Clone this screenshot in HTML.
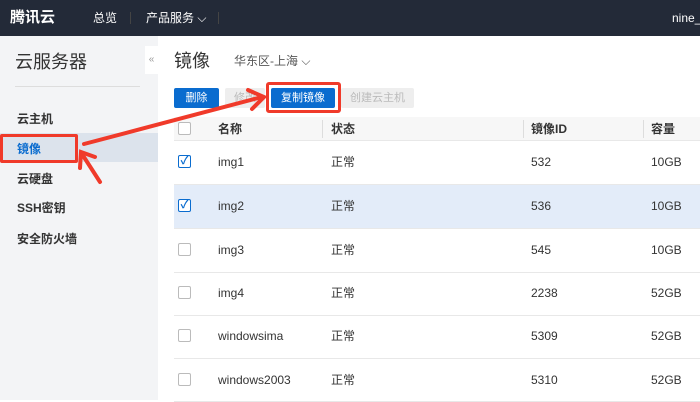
<!DOCTYPE html>
<html><head><meta charset="utf-8"><style>
*{margin:0;padding:0;box-sizing:border-box}
body{width:700px;height:400px;overflow:hidden;font-family:"Liberation Sans","Noto Sans CJK SC",sans-serif;background:#fff;position:relative;color:#333}
.top{position:absolute;left:0;top:0;width:700px;height:36px;background:#232a38;color:#fff;font-size:12px}
.top span{position:absolute;top:11px;line-height:14px}
.side{position:absolute;left:0;top:36px;width:158px;height:364px;background:#f3f4f6}
.t{position:absolute;font-size:12px;white-space:nowrap;line-height:16px}
.row{position:absolute;left:174px;width:526px;height:44px;border-bottom:1px solid #e8e8e8}
.cb{position:absolute;left:178px;width:13px;height:13px;border:1px solid #bbb;border-radius:2px;background:#fff}
.btn{position:absolute;top:88px;height:20px;font-size:11px;text-align:center;line-height:20px;border-radius:2px}
.ck{border-color:#0a6ccf;color:#0a6ccf;font-size:11px;line-height:11px;text-align:center;font-weight:bold}
</style></head><body>
<div class="top">
<span style="left:10px;top:10px;font-size:15px;font-weight:bold;line-height:16px">腾讯云</span>
<span style="left:93px">总览</span>
<div style="position:absolute;left:130px;top:12px;width:1px;height:12px;background:#444"></div>
<span style="left:146px">产品服务 ⌵</span>
<div style="position:absolute;left:218px;top:12px;width:1px;height:12px;background:#444"></div>
<span style="left:672px">nine_</span>
</div>
<div class="side"></div>
<div class="t" style="left:15px;top:52px;font-size:18px;line-height:20px;color:#333">云服务器</div>
<div style="position:absolute;left:15px;top:86px;width:125px;height:1px;background:#ddd"></div>
<div style="position:absolute;left:145px;top:46px;width:13px;height:28px;background:#fff;color:#999;font-size:10px;text-align:center;line-height:28px">«</div>
<div style="position:absolute;left:0;top:133px;width:158px;height:29px;background:#dce3ec"></div>
<div class="t" style="left:17px;top:111px;font-weight:bold">云主机</div>
<div class="t" style="left:17px;top:141px;font-weight:bold;color:#0a6ccf">镜像</div>
<div class="t" style="left:17px;top:171px;font-weight:bold">云硬盘</div>
<div class="t" style="left:17px;top:200px;font-weight:bold">SSH密钥</div>
<div class="t" style="left:17px;top:231px;font-weight:bold">安全防火墙</div>
<div style="position:absolute;left:0;top:134px;width:78px;height:29px;border:3px solid #f03a2a;border-radius:2px"></div>

<div class="t" style="left:174px;top:51px;font-size:18px;line-height:20px">镜像</div>
<div class="t" style="left:234px;top:53px;color:#555">华东区-上海 ⌵</div>
<div class="btn" style="left:174px;width:45px;background:#0a6ccf;color:#fff">删除</div>
<div class="btn" style="left:225px;width:40px;background:#eee;color:#bbb">修改</div>
<div class="btn" style="left:271px;width:64px;background:#0a6ccf;color:#fff">复制镜像</div>
<div style="position:absolute;left:266px;top:82px;width:75px;height:31px;border:3px solid #f03a2a;border-radius:3px"></div>
<div class="btn" style="left:341px;width:73px;background:#eee;color:#bbb">创建云主机</div>

<div class="row" style="top:117px;height:24px;background:#f7f7f7"></div>
<div class="cb" style="top:122px"></div>
<div class="t" style="left:218px;top:121px;font-weight:bold">名称</div>
<div class="t" style="left:331px;top:121px;font-weight:bold">状态</div>
<div class="t" style="left:531px;top:121px;font-weight:bold">镜像ID</div>
<div class="t" style="left:651px;top:121px;font-weight:bold">容量</div>
<div style="position:absolute;left:322px;top:120px;width:1px;height:18px;background:#ddd"></div>
<div style="position:absolute;left:523px;top:120px;width:1px;height:18px;background:#ddd"></div>
<div style="position:absolute;left:643px;top:120px;width:1px;height:18px;background:#ddd"></div>

<div class="row" style="top:141px"></div>
<div class="row" style="top:185px;background:#e3ecf9"></div>
<div class="row" style="top:229px"></div>
<div class="row" style="top:272px"></div>
<div class="row" style="top:315px"></div>
<div class="row" style="top:358px"></div>

<div class="cb ck" style="top:155px">✓</div>
<div class="t" style="left:218px;top:154px">img1</div><div class="t" style="left:331px;top:154px">正常</div><div class="t" style="left:531px;top:154px">532</div><div class="t" style="left:651px;top:154px">10GB</div>
<div class="cb ck" style="top:199px">✓</div>
<div class="t" style="left:218px;top:198px">img2</div><div class="t" style="left:331px;top:198px">正常</div><div class="t" style="left:531px;top:198px">536</div><div class="t" style="left:651px;top:198px">10GB</div>
<div class="cb" style="top:243px"></div>
<div class="t" style="left:218px;top:242px">img3</div><div class="t" style="left:331px;top:242px">正常</div><div class="t" style="left:531px;top:242px">545</div><div class="t" style="left:651px;top:242px">10GB</div>
<div class="cb" style="top:286px"></div>
<div class="t" style="left:218px;top:285px">img4</div><div class="t" style="left:331px;top:285px">正常</div><div class="t" style="left:531px;top:285px">2238</div><div class="t" style="left:651px;top:285px">52GB</div>
<div class="cb" style="top:329px"></div>
<div class="t" style="left:218px;top:328px">windowsima</div><div class="t" style="left:331px;top:328px">正常</div><div class="t" style="left:531px;top:328px">5309</div><div class="t" style="left:651px;top:328px">52GB</div>
<div class="cb" style="top:373px"></div>
<div class="t" style="left:218px;top:372px">windows2003</div><div class="t" style="left:331px;top:372px">正常</div><div class="t" style="left:531px;top:372px">5310</div><div class="t" style="left:651px;top:372px">52GB</div>

<svg width="700" height="400" style="position:absolute;left:0;top:0">
<g stroke="#f03a2a" stroke-width="4" fill="none" stroke-linecap="round">
<path d="M84 144 L262 97"/><path d="M248 90 L264 97 L252 109"/>
<path d="M100 182 L82 154"/><path d="M80 168 L81 152 L95 157"/>
</g></svg>
</body></html>
